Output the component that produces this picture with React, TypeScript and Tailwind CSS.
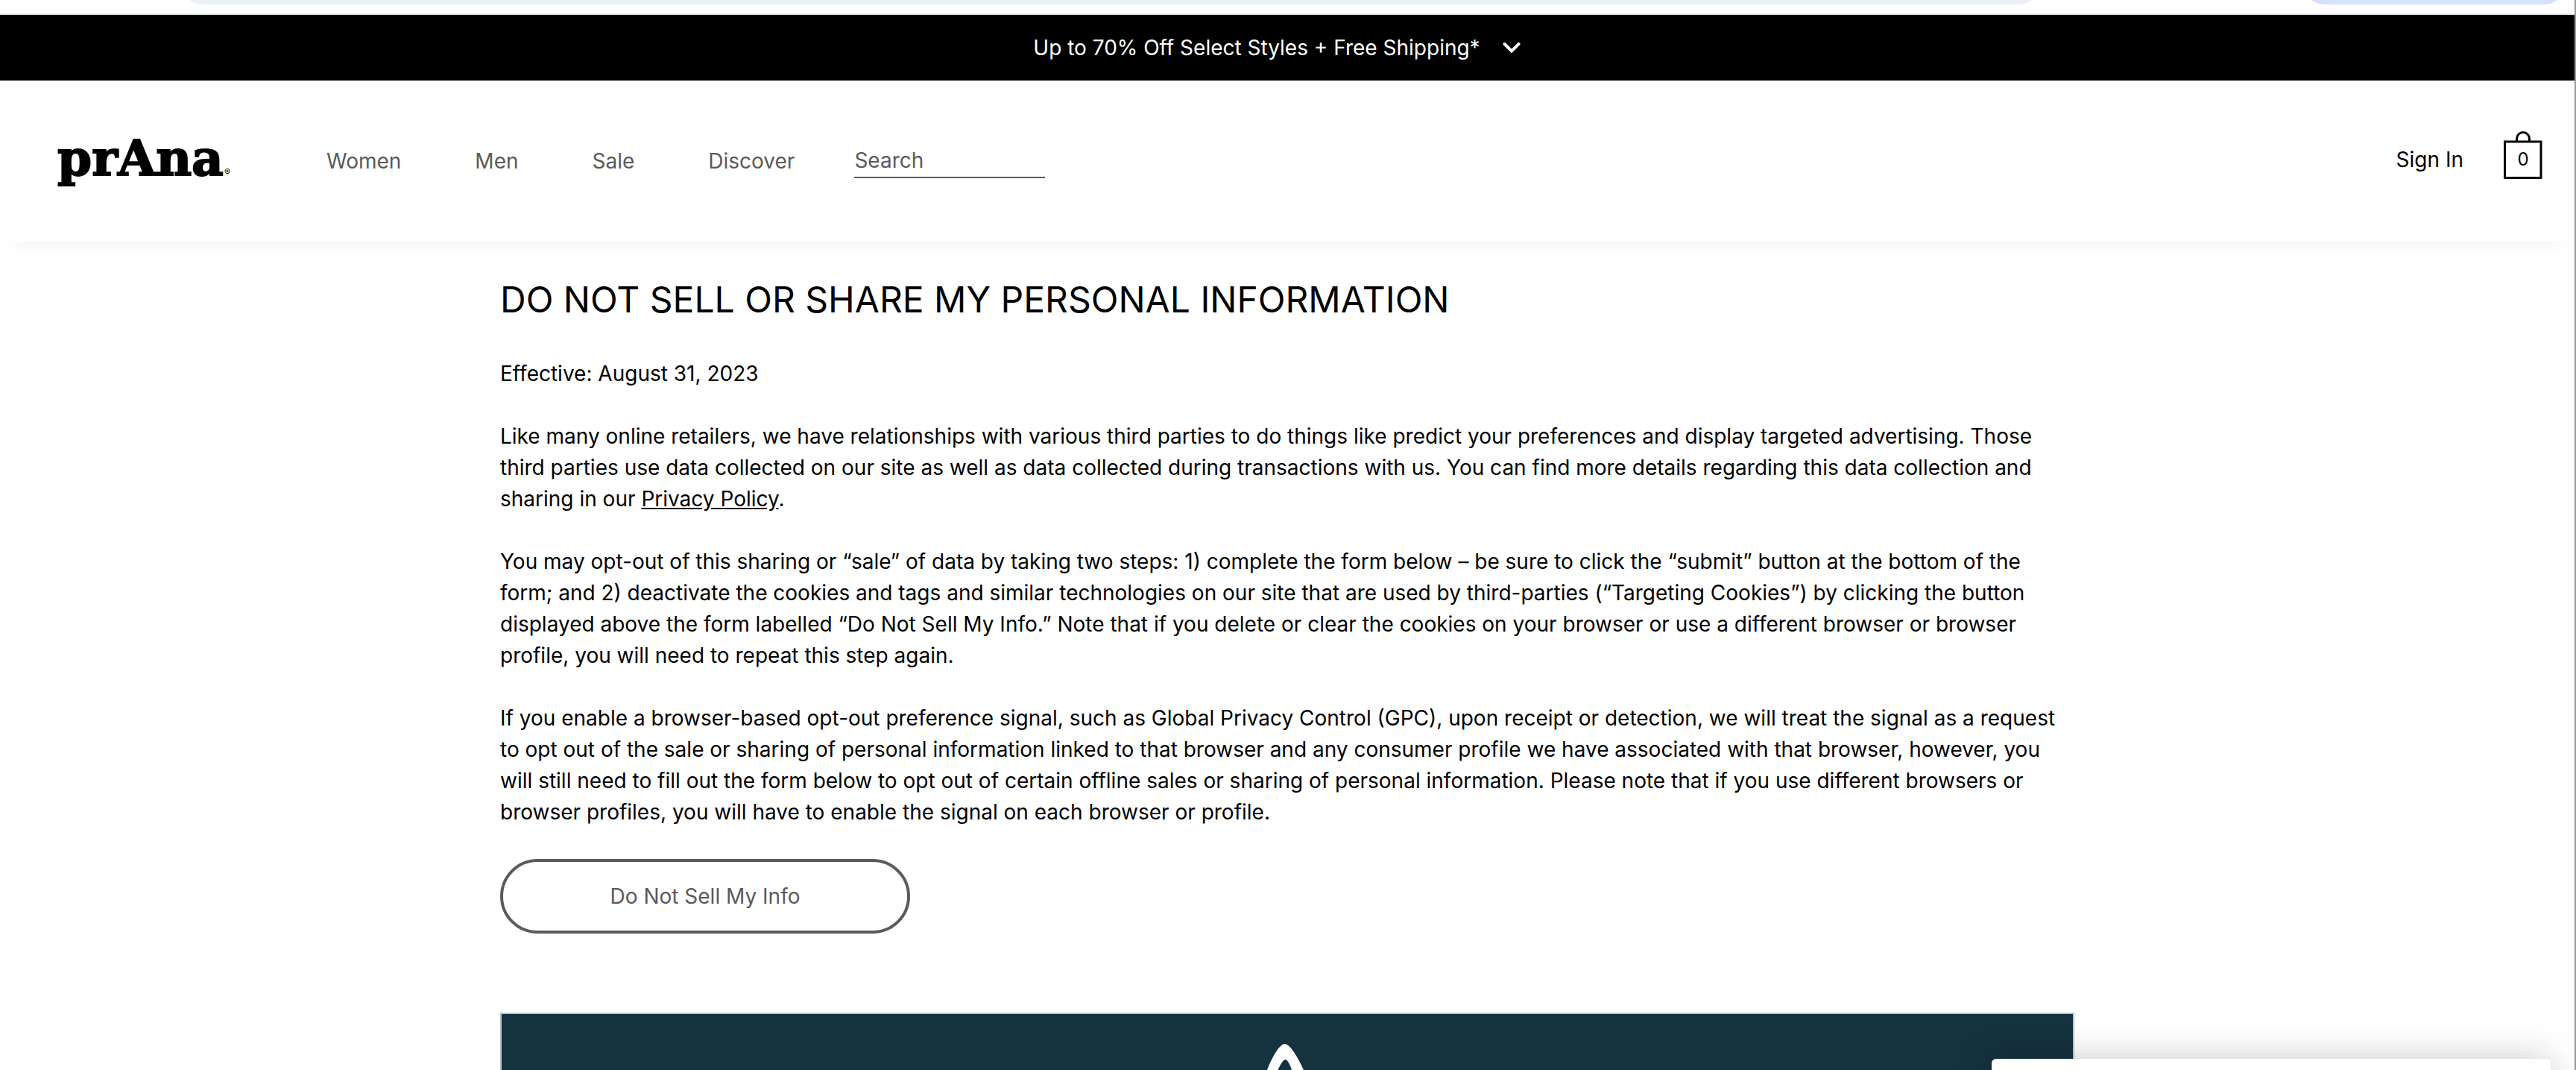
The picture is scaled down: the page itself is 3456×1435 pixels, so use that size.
import React from "react";

const navItems = ["Women", "Men", "Sale", "Discover"];

function BrowserEdge() {
  return (
    <div className="flex h-5 items-end overflow-hidden border-b-2 border-[#e2e4e3] bg-white pr-2 pb-3 pl-[239px]" aria-hidden="true">
      <div className="h-[68px] flex-1 rounded-full bg-[#ebeff8]" />
      <div className="ml-[345px] h-[68px] w-[360px] shrink-0 rounded-full bg-[#d6e2fb]" />
    </div>
  );
}

function PromoBanner() {
  return (
    <div className="flex h-[88px] items-center justify-center bg-black text-white">
      <button type="button" className="flex items-center gap-[30px] pr-7 text-[28px] leading-[42px]">
        Up to 70% Off Select Styles + Free Shipping*
        <svg width="24" height="16" viewBox="0 0 24 16" fill="none" stroke="currentColor" strokeWidth="4" aria-hidden="true">
          <path d="M2.500 3l9.500 9.500L21.500 3" strokeLinecap="round" />
        </svg>
      </button>
    </div>
  );
}

function Header() {
  return (
    <header className="flex h-[216px] items-center justify-between bg-white pr-[43px] pl-[77px] shadow-[0_24px_20px_-20px_rgba(0,0,0,0.05)]">
      <div className="flex items-center">
        <a href="#home" aria-label="prAna home" className="mb-2 flex w-[361px] items-baseline gap-px font-['DejaVu_Serif',serif] text-[66px] leading-[76px] font-bold [-webkit-text-stroke:2px_black]">
          prAna
          <span className="font-['Inter',sans-serif] text-[12px] leading-3 font-normal [-webkit-text-stroke:0]">®</span>
        </a>
        <nav className="flex items-center gap-[99px] text-[#5a5a5a]">
          {navItems.map((item) => (
            <a key={item} href={`#${item.toLowerCase()}`} className="text-[28px] leading-[42px]">
              {item}
            </a>
          ))}
        </nav>
        <input
          type="search"
          aria-label="Search"
          placeholder="Search"
          className="ml-20 h-[46px] w-64 border-b-2 border-[#5a5a5a] bg-transparent text-[28px] outline-none placeholder:text-[#5a5a5a] placeholder:opacity-100"
        />
      </div>
      <div className="flex items-center gap-[54px]">
        <a href="#sign-in" className="mb-1 text-[28px] leading-[42px]">
          Sign In
        </a>
        <button type="button" aria-label="Bag, 0 items" className="relative mb-4 h-16 w-[52px]">
          <svg width="52" height="64" viewBox="0 0 52 64" fill="none" stroke="currentColor" strokeWidth="3" aria-hidden="true">
            <rect x="1.5" y="14" width="48.5" height="48.5" />
            <path d="M17.5 14v-4a8.5 8.5 0 0 1 17 0v4" />
          </svg>
          <span className="absolute inset-x-0 top-3 text-center text-[24px] leading-[52px]">0</span>
        </button>
      </div>
    </header>
  );
}

export default function App() {
  return (
    <div className="flex min-h-screen flex-col border-r-2 border-[#999999] bg-white font-['Inter',sans-serif] text-black">
      <BrowserEdge />
      <PromoBanner />
      <Header />
      <main className="mx-auto flex w-full max-w-[2112px] flex-1 flex-col text-[28px] leading-[42px]">
        <h1 className="mt-12 text-[48px] leading-[60px]">DO NOT SELL OR SHARE MY PERSONAL INFORMATION</h1>
        <div className="mt-12 flex flex-col gap-[42px]">
          <p>Effective: August 31, 2023</p>
          <p>
            Like many online retailers, we have relationships with various third parties to do things like predict your preferences and display targeted advertising. Those third parties use data collected on our site as well as data collected during transactions with us. You can find more details regarding this data collection and sharing in our{" "}
            <a href="#privacy" className="underline">Privacy Policy</a>.
          </p>
          <p>
            You may opt-out of this sharing or “sale” of data by taking two steps: 1) complete the form below – be sure to click the “submit” button at the bottom of the form; and 2) deactivate the cookies and tags and similar technologies on our site that are used by third-parties (“Targeting Cookies”) by clicking the button displayed above the form labelled “Do Not Sell My Info.” Note that if you delete or clear the cookies on your browser or use a different browser or browser profile, you will need to repeat this step again.
          </p>
          <p>
            If you enable a browser-based opt-out preference signal, such as Global Privacy Control (GPC), upon receipt or detection, we will treat the signal as a request to opt out of the sale or sharing of personal information linked to that browser and any consumer profile we have associated with that browser, however, you will still need to fill out the form below to opt out of certain offline sales or sharing of personal information. Please note that if you use different browsers or browser profiles, you will have to enable the signal on each browser or profile.
          </p>
        </div>
        <button type="button" className="mt-[42px] h-[100px] w-[550px] rounded-full border-4 border-[#5a5a5a] text-[#5a5a5a]">
          Do Not Sell My Info
        </button>
        <section aria-label="Request form" className="mt-[106px] flex flex-1 justify-center overflow-hidden border-x-2 border-t-2 border-[#bcc2c7] bg-[#15323f] pt-10">
          <svg width="56" height="35" viewBox="0 0 56 35" fill="#ffffff" aria-hidden="true">
            <path fillRule="evenodd" d="M1 35C8 17 18 0 24.500 0S41 15 50 35H34C31 26 28 21 25.500 21S19 27 15.500 35Z" />
          </svg>
        </section>
      </main>
      <aside aria-label="Notice" className="fixed right-[34px] -bottom-[285px] h-[300px] w-[750px] rounded-md bg-white shadow-[0_0_50px_rgba(0,0,0,0.22)]" />
    </div>
  );
}
